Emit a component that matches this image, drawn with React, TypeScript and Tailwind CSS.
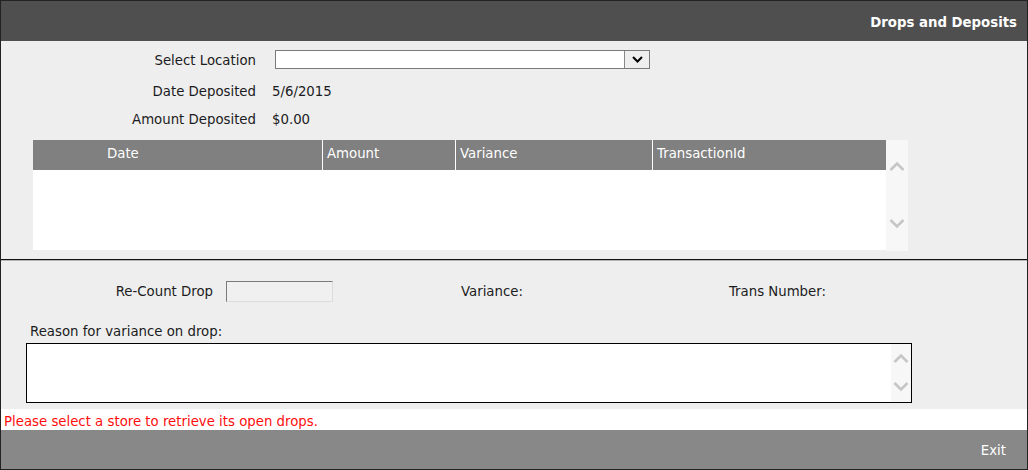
import React from "react";

function Chevron({ up }: { up?: boolean }) {
  return (
    <svg width="16" height="10" viewBox="0 0 16 10">
      <path
        d={up ? "M1.5 9 L8 2.5 L14.5 9" : "M1.5 1 L8 7.5 L14.5 1"}
        fill="none"
        stroke="currentColor"
        strokeWidth="2.6"
      />
    </svg>
  );
}

function Scrollbar({ className }: { className: string }) {
  return (
    <div className={`flex flex-col items-center bg-[#f7f7f7] text-[#c6c6c6] ${className}`}>
      <Chevron up />
      <div className="flex-1" />
      <Chevron />
    </div>
  );
}

export default function App() {
  return (
    <div
      className="w-[1028px] h-[470px] flex flex-col border border-[#222] bg-[#eeeeee] text-[13.3px] text-[#1b1b22]"
      style={{ fontFamily: '"DejaVu Sans", Verdana, sans-serif' }}
    >
      {/* title bar */}
      <div className="h-[40px] bg-[#4f4f4f] flex items-center justify-end pr-[10px] pt-[3px] shrink-0">
        <span className="text-white font-bold text-[13.3px]">Drops and Deposits</span>
      </div>

      {/* top section */}
      <div className="flex flex-col border-b border-[#111] pb-[8px]">
        <div className="flex items-center h-[19px] mt-[9px]">
          <div className="w-[255px] text-right pt-[2px]">Select Location</div>
          <div className="ml-[19px] w-[375px] h-[19px] bg-white border border-[#7a7a7a] flex justify-end">
            <div className="w-[25px] h-full bg-[#eeeeee] border-l border-[#888] flex items-center justify-center">
              <svg width="11" height="7" viewBox="0 0 11 7">
                <path d="M1 1 L5.5 5.5 L10 1" fill="none" stroke="#000" strokeWidth="2" />
              </svg>
            </div>
          </div>
        </div>
        <div className="flex items-center h-[16px] mt-[15px]">
          <div className="w-[255px] text-right">Date Deposited</div>
          <div className="ml-[16px]">5/6/2015</div>
        </div>
        <div className="flex items-center h-[16px] mt-[12px]">
          <div className="w-[255px] text-right">Amount Deposited</div>
          <div className="ml-[16px]">$0.00</div>
        </div>

        {/* grid */}
        <div className="flex ml-[32px] mt-[12px] h-[111px]">
          <div className="w-[853px] flex flex-col">
            <div className="h-[30px] bg-[#808080] text-white flex">
              <div className="w-[290px] border-r border-white pl-[74px] pt-[4px]">Date</div>
              <div className="w-[133px] border-r border-white pl-[4px] pt-[4px]">Amount</div>
              <div className="w-[197px] border-r border-white pl-[4px] pt-[4px]">Variance</div>
              <div className="flex-1 pl-[4px] pt-[4px]">TransactionId</div>
            </div>
            <div className="h-[80px] bg-white" />
          </div>
          <Scrollbar className="w-[22px] pt-[21px] pb-[22px]" />
        </div>
      </div>
      <div className="h-px bg-[#b5b5b5]" />

      {/* bottom section */}
      <div className="flex flex-col">
        <div className="flex items-center h-[21px] mt-[20px]">
          <div className="w-[212px] text-right pt-[1px]">Re-Count Drop</div>
          <div className="ml-[13px] w-[107px] h-[21px] bg-[#f0f0f0] border border-[#dcdcdc] border-t-[#7a7a7a] border-l-[#7a7a7a]" />
          <div className="ml-[128px] pt-[1px]">Variance:</div>
          <div className="ml-[206px] pt-[1px]">Trans Number:</div>
        </div>
        <div className="ml-[29px] mt-[22px] h-[16px] leading-[16px]">Reason for variance on drop:</div>
        <div className="ml-[25px] mt-[3px] w-[886px] h-[60px] bg-white border border-black flex justify-end">
          <Scrollbar className="w-[20px] pt-[9px] pb-[10px]" />
        </div>
        <div className="h-[6px]" />
      </div>

      <div className="bg-white h-[21px] flex items-center pl-[3px] pt-[4px] text-[#ff0d0d]">
        Please select a store to retrieve its open drops.
      </div>

      <div className="flex-1 bg-[#888888] flex items-center justify-end pr-[21px] pt-[3px]">
        <span className="text-white">Exit</span>
      </div>
    </div>
  );
}
